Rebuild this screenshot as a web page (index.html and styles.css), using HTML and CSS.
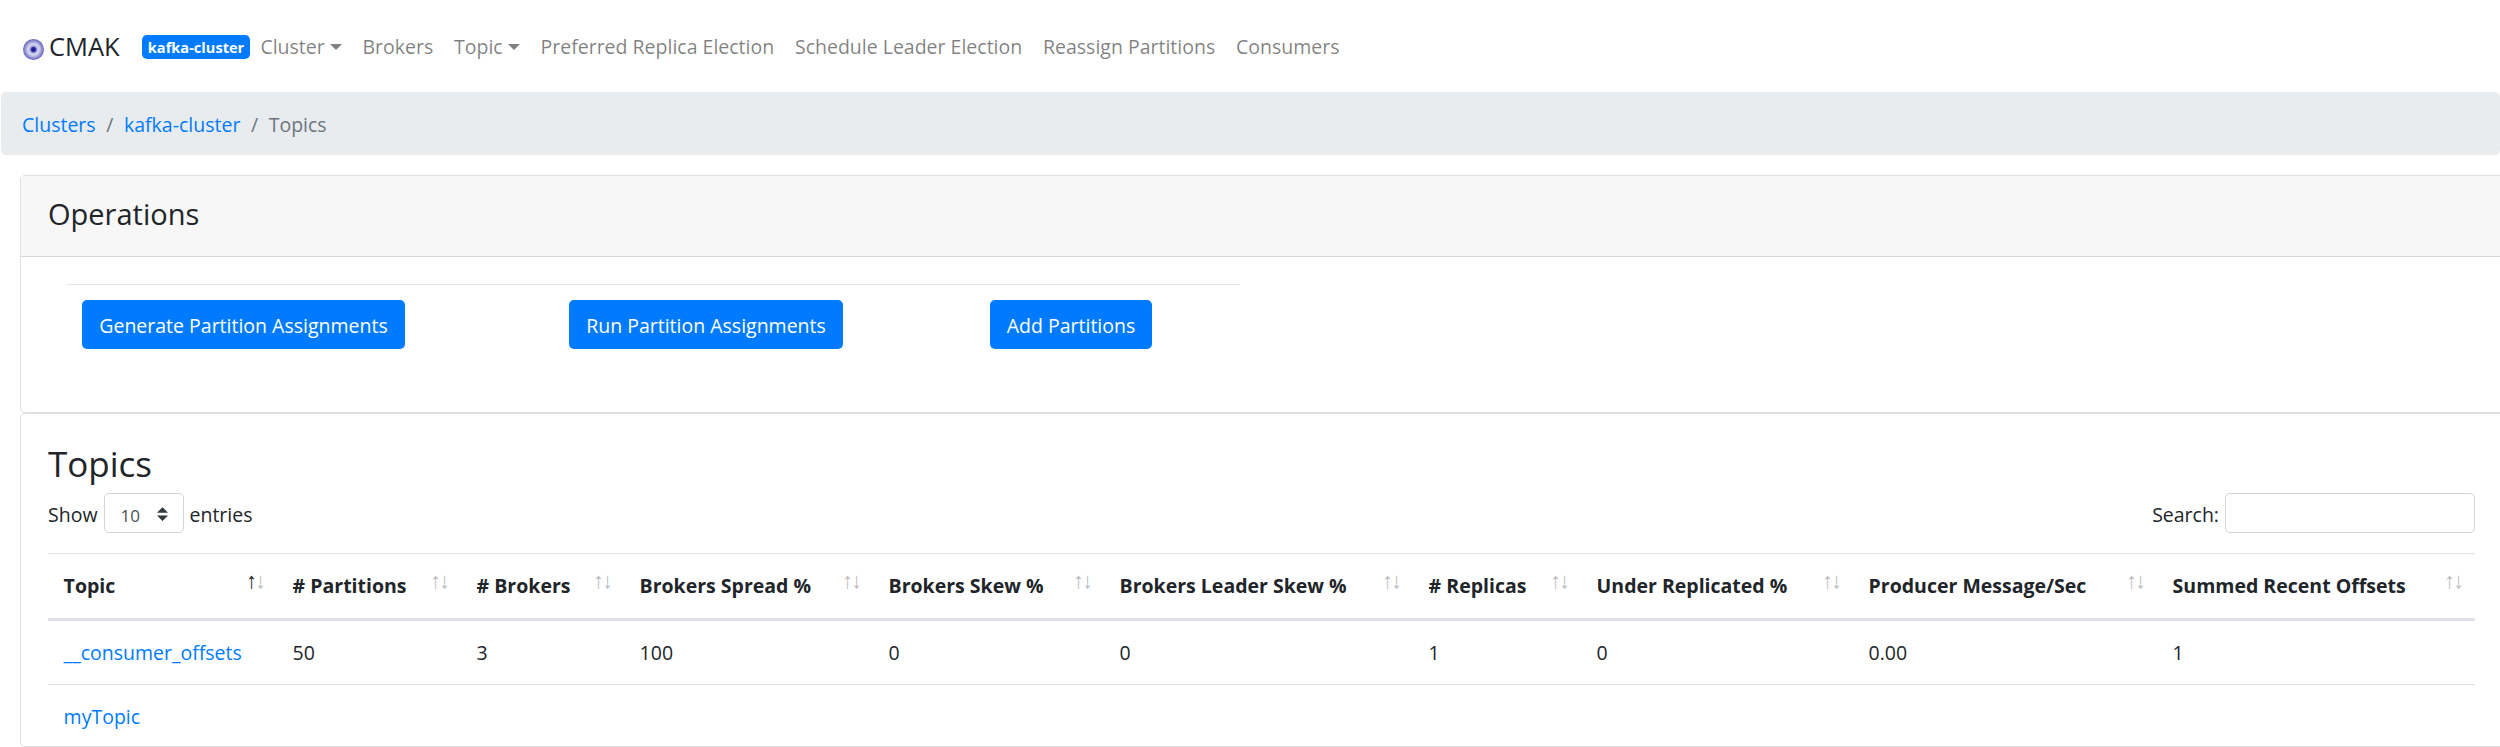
FILE: index.html
```html
<!DOCTYPE html>
<html lang="en">
<head>
<meta charset="UTF-8">
<title>CMAK - Topics</title>
<link rel="stylesheet" href="styles.css">
</head>
<body>
<nav class="navbar">
  <a class="brand" href="#"><span class="logo"></span>CMAK</a>
  <span class="badge">kafka-cluster</span>
  <ul class="nav-links">
    <li><a href="#" class="caret">Cluster</a></li>
    <li><a href="#">Brokers</a></li>
    <li><a href="#" class="caret">Topic</a></li>
    <li><a href="#">Preferred Replica Election</a></li>
    <li><a href="#">Schedule Leader Election</a></li>
    <li><a href="#">Reassign Partitions</a></li>
    <li><a href="#">Consumers</a></li>
  </ul>
</nav>
<ol class="breadcrumb">
  <li><a href="#">Clusters</a></li>
  <li><a href="#">kafka-cluster</a></li>
  <li class="active">Topics</li>
</ol>
<div class="card">
  <div class="card-header">Operations</div>
  <div class="card-body ops-body">
    <hr class="ops-rule">
    <div class="ops-buttons">
      <button class="btn btn-generate">Generate Partition Assignments</button>
      <button class="btn btn-run">Run Partition Assignments</button>
      <button class="btn">Add Partitions</button>
    </div>
  </div>
</div>
<div class="card topics-card">
  <div class="card-body topics-body">
    <h3>Topics</h3>
    <div class="table-controls">
      <label class="length">
        <span class="control-text">Show</span>
        <span class="select-wrap">
          <select><option>10</option></select>
          <svg class="select-arrows" viewBox="0 0 4 5"><path d="M2 0L0 2h4zm0 5L0 3h4z"/></svg>
        </span>
        <span class="control-text">entries</span>
      </label>
      <label class="search">
        <span class="control-text">Search:</span>
        <input type="search">
      </label>
    </div>
    <table>
      <colgroup>
        <col class="c-topic"><col class="c-partitions"><col class="c-brokers"><col class="c-spread"><col class="c-skew">
        <col class="c-leader"><col class="c-replicas"><col class="c-under"><col class="c-producer"><col class="c-summed">
      </colgroup>
      <thead>
        <tr>
          <th class="sorted">Topic</th>
          <th># Partitions</th>
          <th># Brokers</th>
          <th>Brokers Spread %</th>
          <th>Brokers Skew %</th>
          <th>Brokers Leader Skew %</th>
          <th># Replicas</th>
          <th>Under Replicated %</th>
          <th>Producer Message/Sec</th>
          <th>Summed Recent Offsets</th>
        </tr>
      </thead>
      <tbody>
        <tr>
          <td><a href="#">__consumer_offsets</a></td>
          <td>50</td><td>3</td><td>100</td><td>0</td><td>0</td><td>1</td><td>0</td><td>0.00</td><td>1</td>
        </tr>
        <tr>
          <td><a href="#">myTopic</a></td>
          <td></td><td></td><td></td><td></td><td></td><td></td><td></td><td></td><td></td>
        </tr>
      </tbody>
    </table>
  </div>
</div>
</body>
</html>
```

FILE: styles.css
```css
html, body {
  height: 747px;
  overflow: hidden;
}
body {
  margin: 0;
  background-color: #fff;
  color: #212529;
  font-family: "Open Sans", "Noto Sans", sans-serif;
  font-size: 19.5px;
  line-height: 31px;
}
a {
  color: #007bff;
  text-decoration: none;
}
.navbar {
  display: flex;
  align-items: center;
  height: 92px;
  padding-left: 22px;
  box-sizing: border-box;
}
.brand {
  display: flex;
  align-items: center;
  color: #212529;
  font-size: 25.5px;
  width: 120px;
}
.logo {
  width: 21px;
  height: 21px;
  margin: 7px 5px 0 1px;
  border-radius: 50%;
  background: radial-gradient(circle, #20209a 0 2px, #8f8fd0 3px, #d9d9f0 5px, #b4b4e0 7px, #6c6cc0 10px);
}
.badge {
  width: 108px;
  box-sizing: border-box;
  background-color: #007bff;
  color: #fff;
  font-size: 14.6px;
  font-weight: 700;
  line-height: 24px;
  height: 24px;
  text-align: center;
  border-radius: 5px;
  margin-top: 1px;
}
.nav-links {
  display: flex;
  list-style: none;
  margin: 0;
  padding: 0;
}
.nav-links a {
  display: block;
  padding: 0 10.4px;
  color: rgba(0, 0, 0, 0.5);
}
.caret::after {
  content: "";
  display: inline-block;
  margin-left: 5px;
  vertical-align: 4px;
  border-top: 6px solid;
  border-left: 6px solid transparent;
  border-right: 6px solid transparent;
}
.breadcrumb {
  display: flex;
  list-style: none;
  margin: 0 0 20px 1px;
  padding: 17px 21px;
  height: 63px;
  box-sizing: border-box;
  background-color: #e9ecef;
  border-radius: 5px;
}
.breadcrumb li + li::before {
  content: "/";
  color: #6c757d;
  padding: 0 10.6px;
}
.breadcrumb .active {
  color: #6c757d;
}
.card {
  margin: 0 -40px 0 20px;
  border: 1px solid rgba(0, 0, 0, 0.125);
  border-radius: 5px;
}
.card-header {
  height: 80px;
  padding-left: 27px;
  background-color: #f7f7f7;
  border-bottom: 1px solid rgba(0, 0, 0, 0.125);
  font-size: 29px;
  line-height: 76px;
}
.ops-body {
  height: 155px;
  padding: 27px 0 0 46px;
  box-sizing: border-box;
}
.ops-rule {
  width: 1173px;
  margin: 0 0 15px;
  border: 0;
  border-top: 1px solid rgba(0, 0, 0, 0.1);
}
.ops-buttons {
  display: flex;
  padding-left: 15px;
}
.btn {
  height: 49px;
  padding: 2px 0 0;
  border: 0;
  border-radius: 5px;
  background-color: #007bff;
  color: #fff;
  font: inherit;
  white-space: nowrap;
}
.btn-generate {
  width: 323px;
  margin-right: 164px;
}
.btn-run {
  width: 274px;
  margin-right: 147px;
}
.btn:last-child {
  width: 162px;
}
.topics-card {
  height: 334px;
  box-sizing: border-box;
  overflow: hidden;
}
.topics-body {
  padding: 0 0 0 27px;
  width: 2427px;
}
h3 {
  margin: 0;
  padding-top: 26px;
  height: 53px;
  font-size: 35px;
  font-weight: 400;
  line-height: 48px;
}
.table-controls {
  display: flex;
  justify-content: space-between;
  align-items: center;
  height: 40px;
  margin-bottom: 20px;
}
.length,
.search {
  display: flex;
  align-items: center;
  gap: 6px;
}
.control-text {
  padding-top: 3px;
}
.select-wrap {
  position: relative;
}
select {
  display: block;
  appearance: none;
  width: 80px;
  height: 40px;
  padding: 4px 0 0 16px;
  border: 1px solid #ced4da;
  border-radius: 5px;
  background-color: #fff;
  color: #495057;
  font: inherit;
  font-size: 17px;
}
.select-arrows {
  position: absolute;
  left: 53px;
  top: 14px;
  width: 11px;
  height: 14px;
  fill: #343a40;
}
.search input {
  width: 250px;
  height: 40px;
  box-sizing: border-box;
  border: 1px solid #ced4da;
  border-radius: 5px;
}
table {
  width: 2427px;
  table-layout: fixed;
  border-collapse: collapse;
}
.c-topic { width: 229px; }
.c-partitions { width: 184px; }
.c-brokers { width: 163px; }
.c-spread { width: 249px; }
.c-skew { width: 231px; }
.c-leader { width: 309px; }
.c-replicas { width: 168px; }
.c-under { width: 272px; }
.c-producer { width: 304px; }
.c-summed { width: 318px; }
th, td {
  padding: 0 0 0 15.6px;
  text-align: left;
  white-space: nowrap;
}
th {
  position: relative;
  height: 66px;
  padding-bottom: 2px;
  box-sizing: border-box;
  border-top: 1px solid #dee2e6;
  border-bottom: 3px solid #dee2e6;
  font-weight: 700;
}
td {
  height: 63px;
  border-bottom: 1px solid #dee2e6;
}
th::before,
th::after {
  position: absolute;
  top: 11px;
  font-family: "Liberation Sans", sans-serif;
  font-size: 22px;
  font-weight: 400;
  opacity: 0.3;
}
th::before {
  content: "\2191";
  right: 20px;
}
th::after {
  content: "\2193";
  right: 11px;
}
.sorted::before {
  opacity: 1;
}
```
